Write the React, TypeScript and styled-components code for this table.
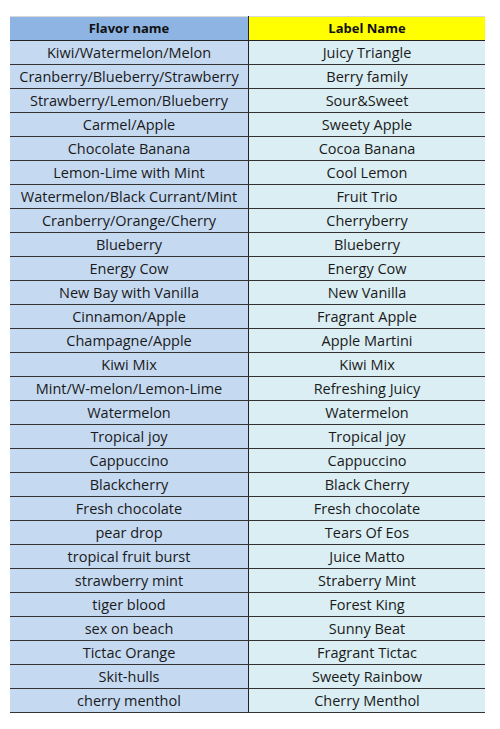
import React from 'react';
import styled, { createGlobalStyle } from 'styled-components';

const rows: [string, string][] = [
    ['Kiwi/Watermelon/Melon', 'Juicy Triangle'],
    ['Cranberry/Blueberry/Strawberry', 'Berry family'],
    ['Strawberry/Lemon/Blueberry', 'Sour&Sweet'],
    ['Carmel/Apple', 'Sweety Apple'],
    ['Chocolate Banana', 'Cocoa Banana'],
    ['Lemon-Lime with Mint', 'Cool Lemon'],
    ['Watermelon/Black Currant/Mint', 'Fruit Trio'],
    ['Cranberry/Orange/Cherry', 'Cherryberry'],
    ['Blueberry', 'Blueberry'],
    ['Energy Cow', 'Energy Cow'],
    ['New Bay with Vanilla', 'New Vanilla'],
    ['Cinnamon/Apple', 'Fragrant Apple'],
    ['Champagne/Apple', 'Apple Martini'],
    ['Kiwi Mix', 'Kiwi Mix'],
    ['Mint/W-melon/Lemon-Lime', 'Refreshing Juicy'],
    ['Watermelon', 'Watermelon'],
    ['Tropical joy', 'Tropical joy'],
    ['Cappuccino', 'Cappuccino'],
    ['Blackcherry', 'Black Cherry'],
    ['Fresh chocolate', 'Fresh chocolate'],
    ['pear drop', 'Tears Of Eos'],
    ['tropical fruit burst', 'Juice Matto'],
    ['strawberry mint', 'Straberry Mint'],
    ['tiger blood', 'Forest King'],
    ['sex on beach', 'Sunny Beat'],
    ['Tictac Orange', 'Fragrant Tictac'],
    ['Skit-hulls', 'Sweety Rainbow'],
    ['cherry menthol', 'Cherry Menthol'],
];

export default function App(): JSX.Element {
    return (
        <>
            <GlobalStyle />
            <Page>
                <Sheet>
                    <thead>
                        <tr>
                            <HeadCell side="left">Flavor name</HeadCell>
                            <HeadCell side="right">Label Name</HeadCell>
                        </tr>
                    </thead>
                    <tbody>
                        {rows.map(([flavor, label]) => (
                            <tr key={flavor}>
                                <Cell side="left">{flavor}</Cell>
                                <Cell side="right">{label}</Cell>
                            </tr>
                        ))}
                    </tbody>
                </Sheet>
            </Page>
        </>
    );
}

const GlobalStyle = createGlobalStyle`
    body {
        margin: 0;
        background: #fff;
        font-family: "Open Sans", "Liberation Sans", sans-serif;
        color: #1a1a1a;
    }
`;

const Page = styled.div`
    padding: 16px 16px 0 10px;
`;

const Sheet = styled.table`
    width: 474px;
    border-collapse: collapse;
    table-layout: fixed;
    border-top: 1px solid #d8d8d8;
    border-bottom: 1px solid #333;
`;

interface SideProps {
    side: 'left' | 'right';
}

const HeadCell = styled.th<SideProps>`
    width: ${p => (p.side === 'left' ? '238px' : '236px')};
    height: 23px;
    padding: 0;
    line-height: 23px;
    font-size: 13px;
    font-weight: 700;
    text-align: center;
    color: #111;
    background: ${p => (p.side === 'left' ? '#8db4e2' : '#ffff00')};
    border-bottom: 1px solid #222;
    border-left: ${p => (p.side === 'right' ? '1px solid #222' : 'none')};
`;

const Cell = styled.td<SideProps>`
    height: 23px;
    padding: 0;
    line-height: 23px;
    font-size: 14.5px;
    text-align: center;
    white-space: nowrap;
    background: ${p => (p.side === 'left' ? '#c5d9f1' : '#daeef3')};
    border-bottom: 1px solid #333;
    border-left: ${p => (p.side === 'right' ? '1px solid #222' : 'none')};
`;
